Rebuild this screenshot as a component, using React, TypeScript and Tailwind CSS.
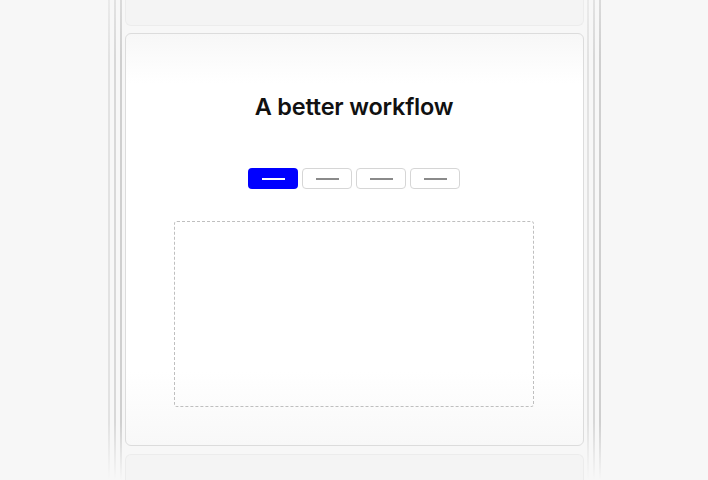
import React from "react";

function Lines() {
  return (
    <div className="flex h-full gap-[4px]">
      <div className="w-[2px] h-full bg-[linear-gradient(to_bottom,#eaeaea,#e2e2e2_12%,#e2e2e2_88%,transparent)]" />
      <div className="w-[2px] h-full bg-[linear-gradient(to_bottom,#e2e2e2,#d8d8d8_12%,#d8d8d8_88%,transparent)]" />
      <div className="w-[2px] h-full bg-[linear-gradient(to_bottom,#dadada,#cfcfcf_12%,#cfcfcf_88%,transparent)]" />
    </div>
  );
}

function Tab({ active }: { active?: boolean }) {
  return (
    <div
      className={
        active
          ? "w-[50px] h-[21px] rounded-[4px] bg-[#0000ff] flex items-center justify-center"
          : "w-[50px] h-[21px] rounded-[4px] bg-white border border-[#d6d6d6] flex items-center justify-center"
      }
    >
      <div className={active ? "w-[23px] h-[2px] bg-white" : "w-[23px] h-[2px] bg-[#8a8a8a]"} />
    </div>
  );
}

export default function App() {
  return (
    <div className="w-[708px] h-[480px] bg-[#f7f7f7] overflow-hidden flex justify-center" style={{ fontFamily: "Inter, 'Noto Sans', sans-serif" }}>
      <div className="flex h-full gap-[3px]">
        <div className="h-full">
          <Lines />
        </div>
        <div className="w-[459px] flex flex-col">
          <div className="h-[26px] rounded-b-[6px] bg-[#f4f4f4] border border-t-0 border-[#ececec]" />
          <div className="mt-[7px] h-[413px] rounded-[6px] border border-[#dcdcdc] bg-[linear-gradient(to_bottom,#f7f7f7,#ffffff_12%,#ffffff_82%,#f8f8f8)] flex flex-col items-center pt-[58px]">
            <h1 className="text-[23.5px] leading-[30px] font-semibold text-[#111] tracking-[-0.2px]">A better workflow</h1>
            <div className="mt-[46px] flex gap-[4px]">
              <Tab active />
              <Tab />
              <Tab />
              <Tab />
            </div>
            <div className="mt-[32px] w-[360px] h-[186px] rounded-[3px] border border-dashed border-[#bfbfbf]" />
          </div>
          <div className="mt-[8px] flex-1 rounded-t-[6px] bg-[#f4f4f4] border border-b-0 border-[#ececec]" />
        </div>
        <div className="h-full">
          <Lines />
        </div>
      </div>
    </div>
  );
}
